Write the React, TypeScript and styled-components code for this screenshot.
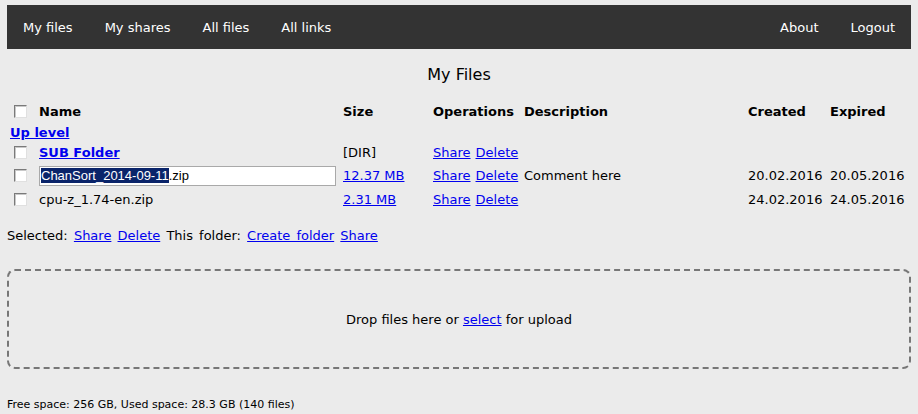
import styled, { createGlobalStyle } from 'styled-components'

const GlobalStyle = createGlobalStyle`
  html, body {
    margin: 0;
    padding: 0;
    background: #ebebeb;
  }
  body {
    font-family: "DejaVu Sans", Verdana, sans-serif;
    font-size: 13px;
    color: #000;
  }
`

const Page = styled.div`
  padding: 5px 7px 0 7px;
`

const NavBar = styled.nav`
  display: flex;
  align-items: center;
  height: 44px;
  background: #333333;
`

const NavGroup = styled.div`
  display: flex;
  align-items: center;
`

const Spacer = styled.div`
  flex: 1;
`

const NavItem = styled.a`
  color: #fff;
  text-decoration: none;
  padding: 2px 16px 0 16px;
  font-size: 13px;
  line-height: 42px;
  cursor: pointer;
`

const Title = styled.h2`
  margin: 15px 0 0 0;
  font-size: 16px;
  font-weight: normal;
  line-height: 22px;
  text-align: center;
`

const Table = styled.table`
  width: 100%;
  table-layout: fixed;
  border-collapse: collapse;
  margin-top: 14px;
`

const HeadCell = styled.th`
  text-align: left;
  font-weight: bold;
  padding: 0 0 0 3px;
  height: 22px;
  white-space: nowrap;
`

const Row = styled.tr<{ $h?: number }>`
  height: ${p => p.$h ?? 21}px;
`

const Cell = styled.td`
  padding: 0 0 0 3px;
  white-space: nowrap;
  vertical-align: middle;
`

const CheckCell = styled.td`
  padding: 0 0 0 7px;
  vertical-align: middle;
`

const CheckHead = styled.th`
  padding: 0 0 0 7px;
  text-align: left;
  vertical-align: middle;
`

const Check = styled.span`
  display: block;
  width: 11px;
  height: 11px;
  background: #fff;
  border: 1px solid;
  border-color: #7a7a7a #e0e0e0 #e0e0e0 #7a7a7a;
  box-shadow: inset 1px 1px 0 #c8c8c8;
`

const Link = styled.a<{ $bold?: boolean }>`
  color: #0000ee;
  text-decoration: underline;
  font-weight: ${p => (p.$bold ? 'bold' : 'normal')};
  cursor: pointer;
`

const OpLinks = styled.span`
  display: inline-flex;
  gap: 5px;
`

const UpLevel = styled.td`
  padding: 0 0 0 3px;
  font-weight: bold;
`

const RenameBox = styled.div`
  width: 293px;
  height: 18px;
  border: 1px solid #a9a9a9;
  background: #fff;
  line-height: 18px;
  padding: 0 1px;
  overflow: hidden;
  white-space: nowrap;
  font-family: "Liberation Sans", Arial, sans-serif;
  font-size: 13px;
`

const Selection = styled.span`
  background: #0a246a;
  color: #fff;
`

const Actions = styled.div`
  margin-top: 16px;
  line-height: 18px;
  word-spacing: 2px;
`

const DropZone = styled.div`
  margin-top: 24px;
  height: 95px;
  border: 2px dashed #777;
  border-radius: 8px;
  display: flex;
  align-items: center;
  justify-content: center;
  padding-top: 1px;
`

const Footer = styled.div`
  margin-top: 29px;
  font-size: 11px;
  line-height: 14px;
`

const files = [
  { name: 'cpu-z_1.74-en.zip', size: '2.31 MB', desc: '', created: '24.02.2016', expired: '24.05.2016' },
]

export default function App() {
  return (
    <>
      <GlobalStyle />
      <Page>
        <NavBar>
          <NavGroup>
            <NavItem>My files</NavItem>
            <NavItem>My shares</NavItem>
            <NavItem>All files</NavItem>
            <NavItem>All links</NavItem>
          </NavGroup>
          <Spacer />
          <NavGroup>
            <NavItem>About</NavItem>
            <NavItem>Logout</NavItem>
          </NavGroup>
        </NavBar>

        <Title>My Files</Title>

        <Table>
          <colgroup>
            <col style={{ width: 29 }} />
            <col style={{ width: 304 }} />
            <col style={{ width: 90 }} />
            <col style={{ width: 91 }} />
            <col style={{ width: 224 }} />
            <col style={{ width: 82 }} />
            <col />
          </colgroup>
          <thead>
            <tr>
              <CheckHead><Check /></CheckHead>
              <HeadCell>Name</HeadCell>
              <HeadCell>Size</HeadCell>
              <HeadCell>Operations</HeadCell>
              <HeadCell>Description</HeadCell>
              <HeadCell>Created</HeadCell>
              <HeadCell>Expired</HeadCell>
            </tr>
          </thead>
          <tbody>
            <Row $h={20}>
              <UpLevel colSpan={7}><Link $bold>Up level</Link></UpLevel>
            </Row>
            <Row $h={21}>
              <CheckCell><Check /></CheckCell>
              <Cell><Link $bold>SUB Folder</Link></Cell>
              <Cell>[DIR]</Cell>
              <Cell><OpLinks><Link>Share</Link><Link>Delete</Link></OpLinks></Cell>
              <Cell />
              <Cell />
              <Cell />
            </Row>
            <Row $h={25}>
              <CheckCell><Check /></CheckCell>
              <Cell>
                <RenameBox><Selection>ChanSort_2014-09-11</Selection>.zip</RenameBox>
              </Cell>
              <Cell><Link>12.37 MB</Link></Cell>
              <Cell><OpLinks><Link>Share</Link><Link>Delete</Link></OpLinks></Cell>
              <Cell>Comment here</Cell>
              <Cell>20.02.2016</Cell>
              <Cell>20.05.2016</Cell>
            </Row>
            {files.map((f, i) => (
              <Row $h={23} key={i}>
                <CheckCell><Check /></CheckCell>
                <Cell>{f.name}</Cell>
                <Cell><Link>{f.size}</Link></Cell>
                <Cell><OpLinks><Link>Share</Link><Link>Delete</Link></OpLinks></Cell>
                <Cell>{f.desc}</Cell>
                <Cell>{f.created}</Cell>
                <Cell>{f.expired}</Cell>
              </Row>
            ))}
          </tbody>
        </Table>

        <Actions>
          Selected: <Link>Share</Link> <Link>Delete</Link> This folder: <Link>Create folder</Link> <Link>Share</Link>
        </Actions>

        <DropZone>
          <span>Drop files here or <Link>select</Link> for upload</span>
        </DropZone>

        <Footer>Free space: 256 GB, Used space: 28.3 GB (140 files)</Footer>
      </Page>
    </>
  )
}
